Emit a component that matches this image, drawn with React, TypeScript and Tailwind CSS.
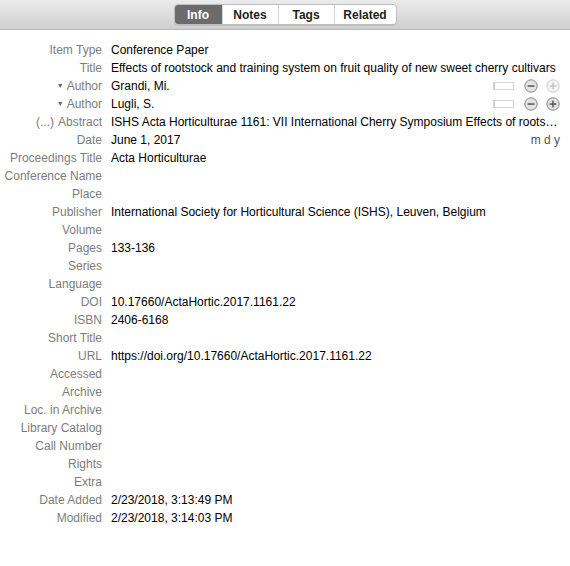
import React from "react";

type Row = {
  label: string;
  value?: string;
  prefix?: string;
  author?: boolean;
  plusDisabled?: boolean;
  truncate?: boolean;
  date?: boolean;
};

const rows: Row[] = [
  { label: "Item Type", value: "Conference Paper" },
  { label: "Title", value: "Effects of rootstock and training system on fruit quality of new sweet cherry cultivars" },
  { label: "Author", value: "Grandi, Mi.", author: true, plusDisabled: true },
  { label: "Author", value: "Lugli, S.", author: true },
  {
    label: "Abstract",
    prefix: "(...)",
    value: "ISHS Acta Horticulturae 1161: VII International Cherry Symposium Effects of rootstock and training system on fruit quality of new sweet cherry cultivars",
    truncate: true,
  },
  { label: "Date", value: "June 1, 2017", date: true },
  { label: "Proceedings Title", value: "Acta Horticulturae" },
  { label: "Conference Name" },
  { label: "Place" },
  { label: "Publisher", value: "International Society for Horticultural Science (ISHS), Leuven, Belgium" },
  { label: "Volume" },
  { label: "Pages", value: "133-136" },
  { label: "Series" },
  { label: "Language" },
  { label: "DOI", value: "10.17660/ActaHortic.2017.1161.22" },
  { label: "ISBN", value: "2406-6168" },
  { label: "Short Title" },
  { label: "URL", value: "https://doi.org/10.17660/ActaHortic.2017.1161.22" },
  { label: "Accessed" },
  { label: "Archive" },
  { label: "Loc. in Archive" },
  { label: "Library Catalog" },
  { label: "Call Number" },
  { label: "Rights" },
  { label: "Extra" },
  { label: "Date Added", value: "2/23/2018, 3:13:49 PM" },
  { label: "Modified", value: "2/23/2018, 3:14:03 PM" },
];

function CircleIcon({ kind, disabled }: { kind: "minus" | "plus"; disabled?: boolean }) {
  const c = disabled ? "#c8c8c8" : "#7a7a7a";
  return (
    <svg width="14" height="14" viewBox="0 0 14 14">
      <circle cx="7" cy="7" r="6.2" fill={disabled ? "#f4f4f4" : "#e2e2e2"} stroke={c} strokeWidth="0.9" />
      <rect x="3.6" y="6.3" width="6.8" height="1.5" fill={disabled ? "#c4c4c4" : "#555"} />
      {kind === "plus" && <rect x="6.25" y="3.6" width="1.5" height="6.8" fill={disabled ? "#c4c4c4" : "#555"} />}
    </svg>
  );
}

function Tabs() {
  const tabs = ["Info", "Notes", "Tags", "Related"];
  const widths = ["w-[47px]", "w-[56px]", "w-[56px]", "w-[62px]"];
  return (
    <div className="flex h-[30px] items-center justify-center border-b border-[#b9b9b9] bg-gradient-to-b from-[#ebebeb] to-[#cfcfcf]">
      <div className="flex h-[21px] overflow-hidden rounded-[4px] border border-[#bdbdbd] bg-white shadow-[0_1px_0_rgba(0,0,0,0.08)]">
        {tabs.map((t, i) => (
          <div
            key={t}
            className={
              "flex items-center justify-center text-[12px] font-bold " +
              widths[i] +
              (i === 0
                ? " bg-[#6b6b6b] text-white"
                : " text-[#222] border-l border-[#d2d2d2]")
            }
          >
            {t}
          </div>
        ))}
      </div>
    </div>
  );
}

export default function App() {
  return (
    <div
      className="h-[566px] w-[570px] overflow-hidden bg-white"
      style={{ fontFamily: '"Liberation Sans", Arial, sans-serif' }}
    >
      <Tabs />
      <div className="flex flex-col pt-[11px]">
        {rows.map((r, i) => (
          <div key={i} className="flex h-[18px] items-center text-[12px]">
            <div className="flex w-[102px] shrink-0 items-center justify-end text-[#7d7d7d]">
              {r.author && <span className="mr-[3px] text-[7px] text-[#666]">▼</span>}
              {r.prefix && <span className="mr-[4px]">{r.prefix}</span>}
              <span>{r.label}</span>
            </div>
            <div className="ml-[9px] flex min-w-0 flex-1 items-center pr-[10px] text-black">
              <span className={r.truncate ? "min-w-0 truncate" : "whitespace-nowrap"}>{r.value}</span>
              {r.author && (
                <div className="ml-auto flex items-center">
                  <div className="h-[8px] w-[21px] border border-[#d4d4d4] bg-white shadow-[inset_1px_0_0_#c8c8c8]" />
                  <div className="ml-[10px]">
                    <CircleIcon kind="minus" />
                  </div>
                  <div className="ml-[8px]">
                    <CircleIcon kind="plus" disabled={r.plusDisabled} />
                  </div>
                </div>
              )}
              {r.date && <span className="ml-auto text-[#555]">m d y</span>}
            </div>
          </div>
        ))}
      </div>
    </div>
  );
}
